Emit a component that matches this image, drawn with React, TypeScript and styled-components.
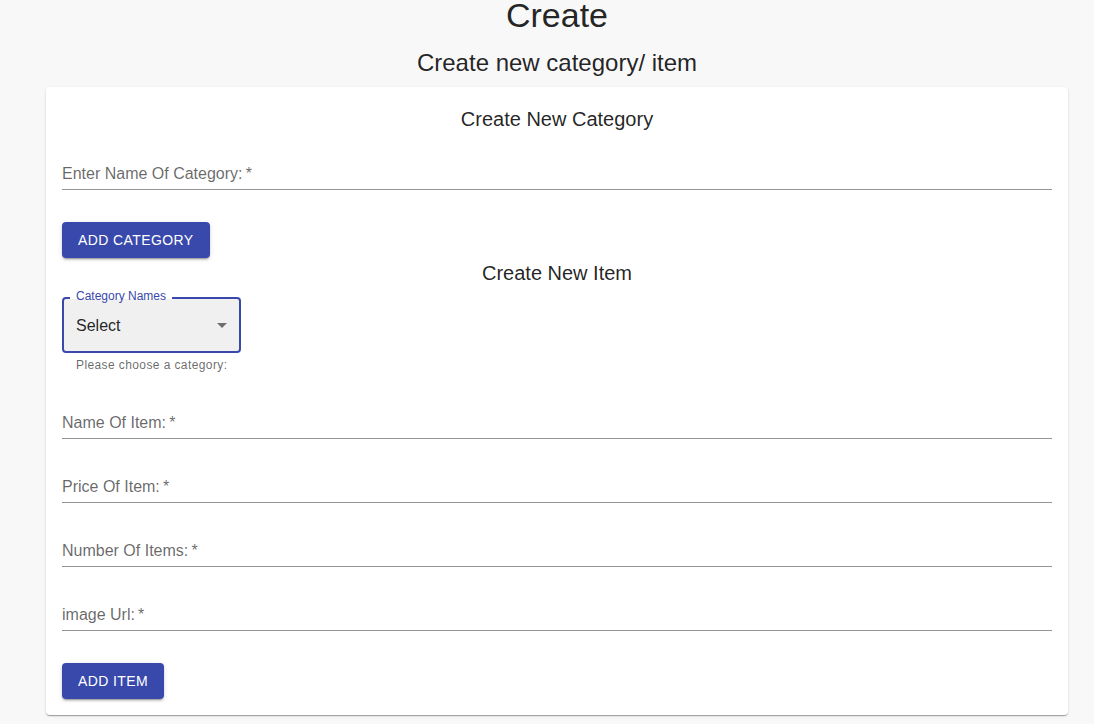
import React from "react";
import styled, { createGlobalStyle } from "styled-components";

const GlobalStyle = createGlobalStyle`
  html, body {
    margin: 0;
    padding: 0;
    background: #f8f8f8;
    font-family: "Liberation Sans", Arial, Helvetica, sans-serif;
  }
  * { box-sizing: border-box; }
`;

const Page = styled.div`
  padding: 0 26px 0 46px;
  min-height: 724px;
  background: #f8f8f8;
`;

const Title = styled.h1`
  margin: 0;
  font-size: 34px;
  line-height: 30px;
  font-weight: 400;
  text-align: center;
  color: rgba(0, 0, 0, 0.87);
`;

const Subtitle = styled.h2`
  margin: 17px 0 8px;
  font-size: 24px;
  line-height: 32px;
  font-weight: 400;
  text-align: center;
  color: rgba(0, 0, 0, 0.87);
`;

const Card = styled.div`
  background: #fff;
  border-radius: 4px;
  box-shadow: 0px 2px 1px -1px rgba(0, 0, 0, 0.2),
    0px 1px 1px 0px rgba(0, 0, 0, 0.14), 0px 1px 3px 0px rgba(0, 0, 0, 0.12);
  padding: 16px;
  display: flex;
  flex-direction: column;
`;

const SectionTitle = styled.h3<{ $mt?: number }>`
  margin: ${(p) => p.$mt ?? 0}px 0 0;
  font-size: 20px;
  line-height: 32px;
  font-weight: 400;
  text-align: center;
  color: rgba(0, 0, 0, 0.87);
`;

const Field = styled.div<{ $mt: number }>`
  margin-top: ${(p) => p.$mt}px;
  height: 48px;
  padding-top: 20px;
  border-bottom: 1px solid rgba(0, 0, 0, 0.42);
`;

const FieldLabel = styled.label`
  display: block;
  font-size: 16px;
  line-height: 23px;
  color: rgba(0, 0, 0, 0.6);
`;

const Button = styled.button<{ $mt: number }>`
  align-self: flex-start;
  margin-top: ${(p) => p.$mt}px;
  height: 36px;
  padding: 0 16px;
  border: none;
  border-radius: 4px;
  background: #3949ab;
  color: #fff;
  font-family: inherit;
  font-size: 14px;
  font-weight: 500;
  letter-spacing: 0.4px;
  text-transform: uppercase;
  box-shadow: 0px 3px 1px -2px rgba(0, 0, 0, 0.2),
    0px 2px 2px 0px rgba(0, 0, 0, 0.14), 0px 1px 5px 0px rgba(0, 0, 0, 0.12);
  cursor: pointer;
`;

const SelectControl = styled.div`
  margin-top: 8px;
  display: flex;
  flex-direction: column;
  align-items: flex-start;
`;

const SelectBox = styled.div`
  position: relative;
  width: 179px;
  height: 56px;
  border: 2px solid #3949ab;
  border-radius: 4px;
  background: #f0f0f0;
  display: flex;
  align-items: center;
  justify-content: space-between;
  padding: 0 5px 0 12px;
`;

const SelectLabel = styled.span`
  position: absolute;
  top: -9px;
  left: 6px;
  height: 12px;
  padding: 0 6px;
  background: linear-gradient(to bottom, #fff 0, #fff 9px, #f0f0f0 9px);
  font-size: 12px;
  line-height: 12px;
  color: #3949ab;
  white-space: nowrap;
`;

const SelectValue = styled.span`
  font-size: 16px;
  line-height: 23px;
  color: rgba(0, 0, 0, 0.87);
`;

const HelperText = styled.p`
  margin: 2px 14px 0;
  font-size: 12px;
  line-height: 20px;
  letter-spacing: 0.4px;
  color: rgba(0, 0, 0, 0.6);
`;

const ArrowIcon = () => (
  <svg width="24" height="24" viewBox="0 0 24 24" aria-hidden="true">
    <path d="M7 10l5 5 5-5z" fill="rgba(0,0,0,0.54)" />
  </svg>
);

const TextField = ({ label, mt }: { label: string; mt: number }) => (
  <Field $mt={mt}>
    <FieldLabel>{label}{"\u2009*"}</FieldLabel>
  </Field>
);

export default function App() {
  return (
    <>
      <GlobalStyle />
      <Page>
        <Title>Create</Title>
        <Subtitle>Create new category/ item</Subtitle>
        <Card>
          <SectionTitle>Create New Category</SectionTitle>
          <TextField label="Enter Name Of Category:" mt={7} />
          <Button $mt={32}>Add Category</Button>
          <SectionTitle $mt={-1}>Create New Item</SectionTitle>
          <SelectControl>
            <SelectBox>
              <SelectLabel>Category Names</SelectLabel>
              <SelectValue>Select</SelectValue>
              <ArrowIcon />
            </SelectBox>
            <HelperText>Please choose a category:</HelperText>
          </SelectControl>
          <TextField label="Name Of Item:" mt={16} />
          <TextField label="Price Of Item:" mt={16} />
          <TextField label="Number Of Items:" mt={16} />
          <TextField label="image Url:" mt={16} />
          <Button $mt={32}>Add Item</Button>
        </Card>
      </Page>
    </>
  );
}
